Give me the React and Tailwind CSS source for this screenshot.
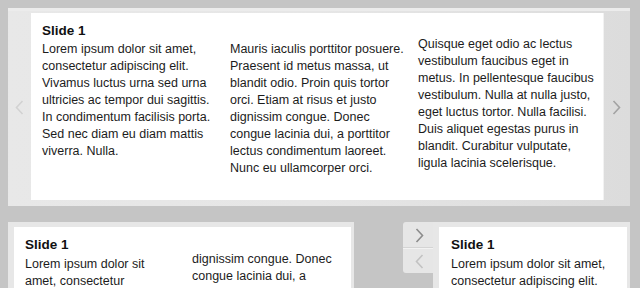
import React from 'react'

const font = { fontFamily: '"Liberation Sans", Arial, sans-serif' }

const Chevron = ({ dir = 'right', className = '' }) => (
  <svg width="9" height="15" viewBox="0 0 9 15" className={className} fill="none">
    {dir === 'right' ? (
      <polyline points="1.5,1 7.5,7.5 1.5,14" stroke="currentColor" strokeWidth="1.6" />
    ) : (
      <polyline points="7.5,1 1.5,7.5 7.5,14" stroke="currentColor" strokeWidth="1.6" />
    )}
  </svg>
)

const Lines = ({ lines }) => (
  <div className="text-[12.5px] leading-[17px] text-[#1c1c1c]">
    {lines.map((l) => (
      <div key={l} className="whitespace-nowrap">{l}</div>
    ))}
  </div>
)

const Title = () => (
  <h3 className="text-[13.5px] font-bold leading-[17px] text-[#111]">Slide 1</h3>
)

const col1 = [
  'Lorem ipsum dolor sit amet,',
  'consectetur adipiscing elit.',
  'Vivamus luctus urna sed urna',
  'ultricies ac tempor dui sagittis.',
  'In condimentum facilisis porta.',
  'Sed nec diam eu diam mattis',
  'viverra. Nulla.',
]
const col2 = [
  'Mauris iaculis porttitor posuere.',
  'Praesent id metus massa, ut',
  'blandit odio. Proin quis tortor',
  'orci. Etiam at risus et justo',
  'dignissim congue. Donec',
  'congue lacinia dui, a porttitor',
  'lectus condimentum laoreet.',
  'Nunc eu ullamcorper orci.',
]
const col3 = [
  'Quisque eget odio ac lectus',
  'vestibulum faucibus eget in',
  'metus. In pellentesque faucibus',
  'vestibulum. Nulla at nulla justo,',
  'eget luctus tortor. Nulla facilisi.',
  'Duis aliquet egestas purus in',
  'blandit. Curabitur vulputate,',
  'ligula lacinia scelerisque.',
]

export default function App() {
  return (
    <div style={font} className="h-[288px] w-[640px] overflow-hidden bg-[#c5c5c5] p-2">
      {/* full width carousel */}
      <section className="flex h-[198px] w-[622px] border-t-[3px] border-[#ececec] bg-gradient-to-r from-[#e8e8e8] via-[#e6e6e6] to-[#dcdcdc] pb-[6px] pt-[2px]">
        <div className="flex w-[23px] items-center justify-center pt-[2px]">
          <Chevron dir="left" className="text-[#d2d2d2]" />
        </div>
        <div className="grid flex-1 grid-cols-[188px_188px_1fr] bg-white pl-[11px] pt-[9px] shadow-[1px_0_0_#f2f2f2]">
          <div>
            <Title />
            <div className="mt-[2px]">
              <Lines lines={col1} />
            </div>
          </div>
          <div className="mt-[19px]">
            <Lines lines={col2} />
          </div>
          <div className="mt-[14px]">
            <Lines lines={col3} />
          </div>
        </div>
        <div className="flex w-[27px] items-center justify-center pt-[2px]">
          <Chevron dir="right" className="text-[#a3a3a3]" />
        </div>
      </section>

      <div className="mt-4 flex">
        {/* narrow carousel left */}
        <section className="h-[70px] w-[346px] bg-[#e7e7e7] pl-[6px] pr-[3px] pt-[5px]">
          <div className="grid h-full grid-cols-[167px_1fr] bg-white pl-[11px] pt-[9px]">
            <div>
              <Title />
              <div className="mt-[3px]">
                <Lines lines={['Lorem ipsum dolor sit', 'amet, consectetur']} />
              </div>
            </div>
            <div className="mt-[15px]">
              <Lines lines={['dignissim congue. Donec', 'congue lacinia dui, a']} />
            </div>
          </div>
        </section>

        {/* carousel with side tab */}
        <div className="ml-[49px] flex">
          <div className="flex h-[51px] w-[30px] flex-col rounded-l-[3px] bg-[#e6e6e6]">
            <div className="flex h-[26px] items-center justify-center border-b border-[#d4d4d4] pl-[3px] pt-[1px]">
              <Chevron dir="right" className="text-[#8c8c8c]" />
            </div>
            <div className="flex flex-1 items-center justify-center border-t border-[#f2f2f2] pl-[2px]">
              <Chevron dir="left" className="text-[#c2c2c2]" />
            </div>
          </div>
          <section className="h-[70px] w-[197px] bg-[#e7e7e7] pl-[6px] pr-[3px] pt-[5px]">
            <div className="h-full bg-white pl-[12px] pt-[9px]">
              <Title />
              <div className="mt-[3px]">
                <Lines lines={['Lorem ipsum dolor sit amet,', 'consectetur adipiscing elit.']} />
              </div>
            </div>
          </section>
        </div>
      </div>
    </div>
  )
}
